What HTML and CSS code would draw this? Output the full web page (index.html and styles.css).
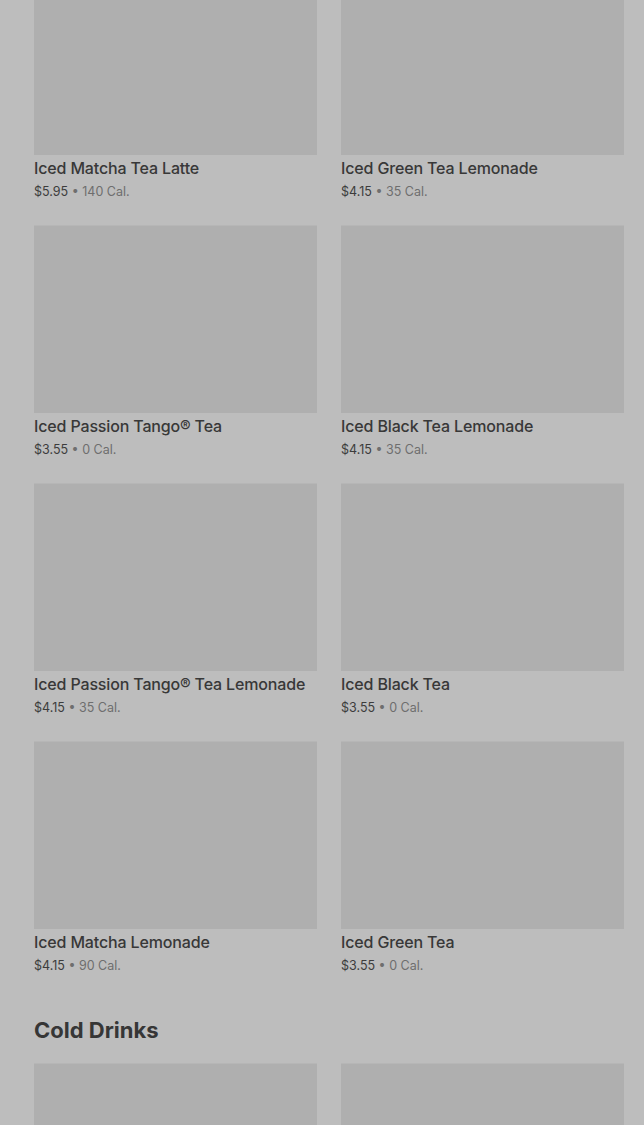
FILE: index.html
```html
<!DOCTYPE html>
<html>
<head>
<meta charset="utf-8">
<link rel="stylesheet" href="styles.css">
</head>
<body>
<main class="page">
  <section class="grid grid-first">
    <article class="card"><div class="thumb"></div><h3 class="name">Iced Matcha Tea Latte</h3><p class="meta"><span class="price">$5.95</span> • <span class="cal">140 Cal.</span></p></article>
    <article class="card"><div class="thumb"></div><h3 class="name">Iced Green Tea Lemonade</h3><p class="meta"><span class="price">$4.15</span> • <span class="cal">35 Cal.</span></p></article>
    <article class="card"><div class="thumb"></div><h3 class="name">Iced Passion Tango® Tea</h3><p class="meta"><span class="price">$3.55</span> • <span class="cal">0 Cal.</span></p></article>
    <article class="card"><div class="thumb"></div><h3 class="name">Iced Black Tea Lemonade</h3><p class="meta"><span class="price">$4.15</span> • <span class="cal">35 Cal.</span></p></article>
    <article class="card"><div class="thumb"></div><h3 class="name">Iced Passion Tango® Tea Lemonade</h3><p class="meta"><span class="price">$4.15</span> • <span class="cal">35 Cal.</span></p></article>
    <article class="card"><div class="thumb"></div><h3 class="name">Iced Black Tea</h3><p class="meta"><span class="price">$3.55</span> • <span class="cal">0 Cal.</span></p></article>
    <article class="card"><div class="thumb"></div><h3 class="name">Iced Matcha Lemonade</h3><p class="meta"><span class="price">$4.15</span> • <span class="cal">90 Cal.</span></p></article>
    <article class="card"><div class="thumb"></div><h3 class="name">Iced Green Tea</h3><p class="meta"><span class="price">$3.55</span> • <span class="cal">0 Cal.</span></p></article>
  </section>
  <h2 class="section-title">Cold Drinks</h2>
  <section class="grid">
    <article class="card"><div class="thumb"></div></article>
    <article class="card"><div class="thumb"></div></article>
  </section>
</main>
</body>
</html>
```
FILE: styles.css
```css
html, body {
  margin: 0;
  padding: 0;
  background: #bdbdbd;
  overflow: hidden;
  height: 1125px;
}
.page {
  padding: 0 20px 0 34px;
  font-family: Inter, "Noto Sans", "Liberation Sans", sans-serif;
}
.grid {
  display: grid;
  grid-template-columns: 283px 283px;
  column-gap: 24px;
  row-gap: 23px;
}
.grid-first {
  margin-top: -33px;
}
.card {
  display: flex;
  flex-direction: column;
}
.thumb {
  height: 188px;
  background: #afafaf;
  border-top: 1px solid #b6b6b6;
  box-sizing: border-box;
}
.name {
  margin: 3px 0 0;
  font-size: 16px;
  line-height: 20px;
  font-weight: 500;
  color: #383838;
  letter-spacing: -0.15px;
}
.meta {
  margin: 4px 0 0;
  font-size: 12.5px;
  line-height: 20px;
  color: #6e6e6e;
  letter-spacing: 0;
}
.price {
  color: #3c3c3c;
}
.section-title {
  margin: 40px 0 19px;
  font-size: 22px;
  line-height: 28px;
  font-weight: 700;
  color: #363636;
  letter-spacing: 0;
}
```
